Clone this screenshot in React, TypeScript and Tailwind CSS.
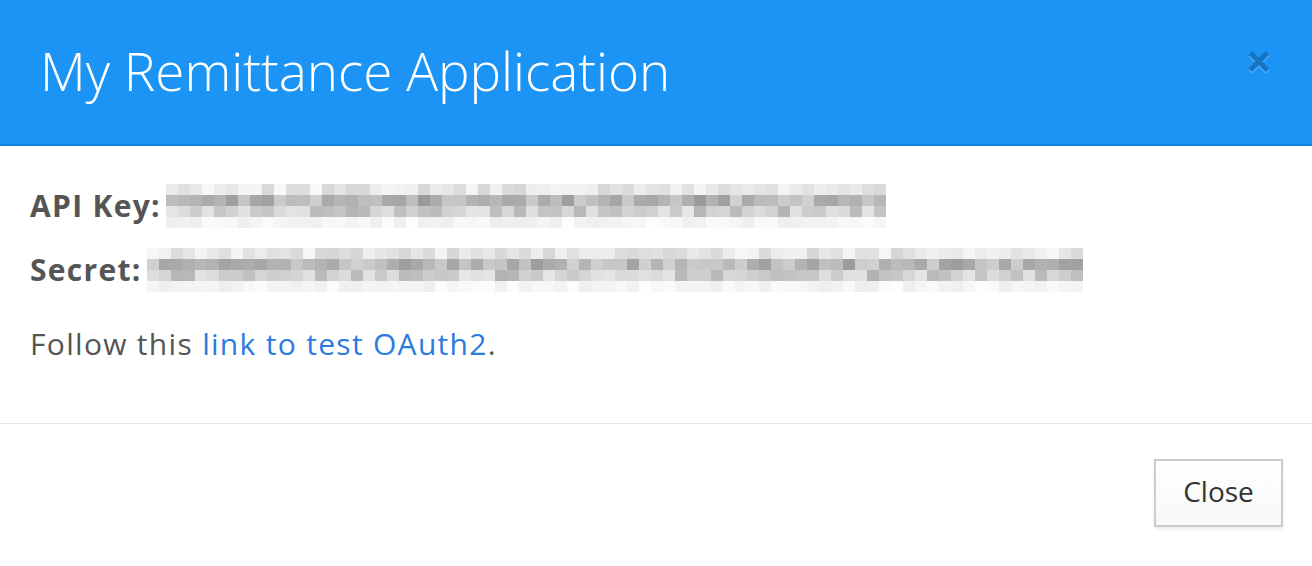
import React from 'react';

// deterministic noise so the blurred values look the same every render
function makeRand(seed: number) {
  let s = seed;
  return () => {
    s = (s * 1103515245 + 12345) % 2147483648;
    return s / 2147483648;
  };
}

const ROW_RANGES: [number, number][] = [
  [214, 248],
  [155, 210],
  [178, 232],
  [238, 253],
];

function Pixelated({ cols, seed }: { cols: number; seed: number }) {
  const rand = makeRand(seed);
  return (
    <div className="flex flex-col">
      {ROW_RANGES.map(([lo, hi], r) => (
        <div key={r} className="flex">
          {Array.from({ length: cols }).map((_, c) => {
            const g = Math.round(lo + rand() * (hi - lo));
            return (
              <div
                key={c}
                className="w-[12px] h-[11px]"
                style={{ backgroundColor: `rgb(${g},${g},${g})` }}
              />
            );
          })}
        </div>
      ))}
    </div>
  );
}

export default function App() {
  return (
    <div className="w-[1312px] h-[566px] bg-white font-['Open_Sans',sans-serif] overflow-hidden">
      <div className="h-[146px] bg-[#1b94f5] border-b-2 border-[#1084e2] flex items-center justify-between pl-[40px] pr-[40px]">
        <h1 className="text-[53px] font-light text-white leading-none pb-[4px]">My Remittance Application</h1>
        <span className="text-[46px] font-bold leading-none text-black opacity-20 [text-shadow:0_2px_0_#fff] pb-[24px]">×</span>
      </div>

      <div className="pt-[37px] pb-[58px] px-[30px] text-[#555] tracking-[1.3px]">
        <div className="flex items-center h-[46px]">
          <span className="text-[30px] font-bold leading-none mr-[5px]">API Key:</span>
          <Pixelated cols={60} seed={7} />
        </div>
        <div className="flex items-center h-[46px] mt-[18px]">
          <span className="text-[30px] font-bold leading-none mr-[5px]">Secret:</span>
          <Pixelated cols={78} seed={31} />
        </div>
        <p className="text-[30px] leading-[42px] mt-[30px]">
          Follow this <a href="#" className="text-[#2b7be0]">link to test OAuth2</a>.
        </p>
      </div>

      <div className="border-t border-[#e5e5e5] flex justify-end pt-[35px] pr-[29px]">
        <button className="w-[129px] h-[68px] border-2 border-[#cccccc] bg-gradient-to-b from-white to-[#f8f8f8] shadow-[0_2px_3px_rgba(0,0,0,0.08)] text-[28px] text-[#333] leading-none pb-[4px]">
          Close
        </button>
      </div>
    </div>
  );
}
